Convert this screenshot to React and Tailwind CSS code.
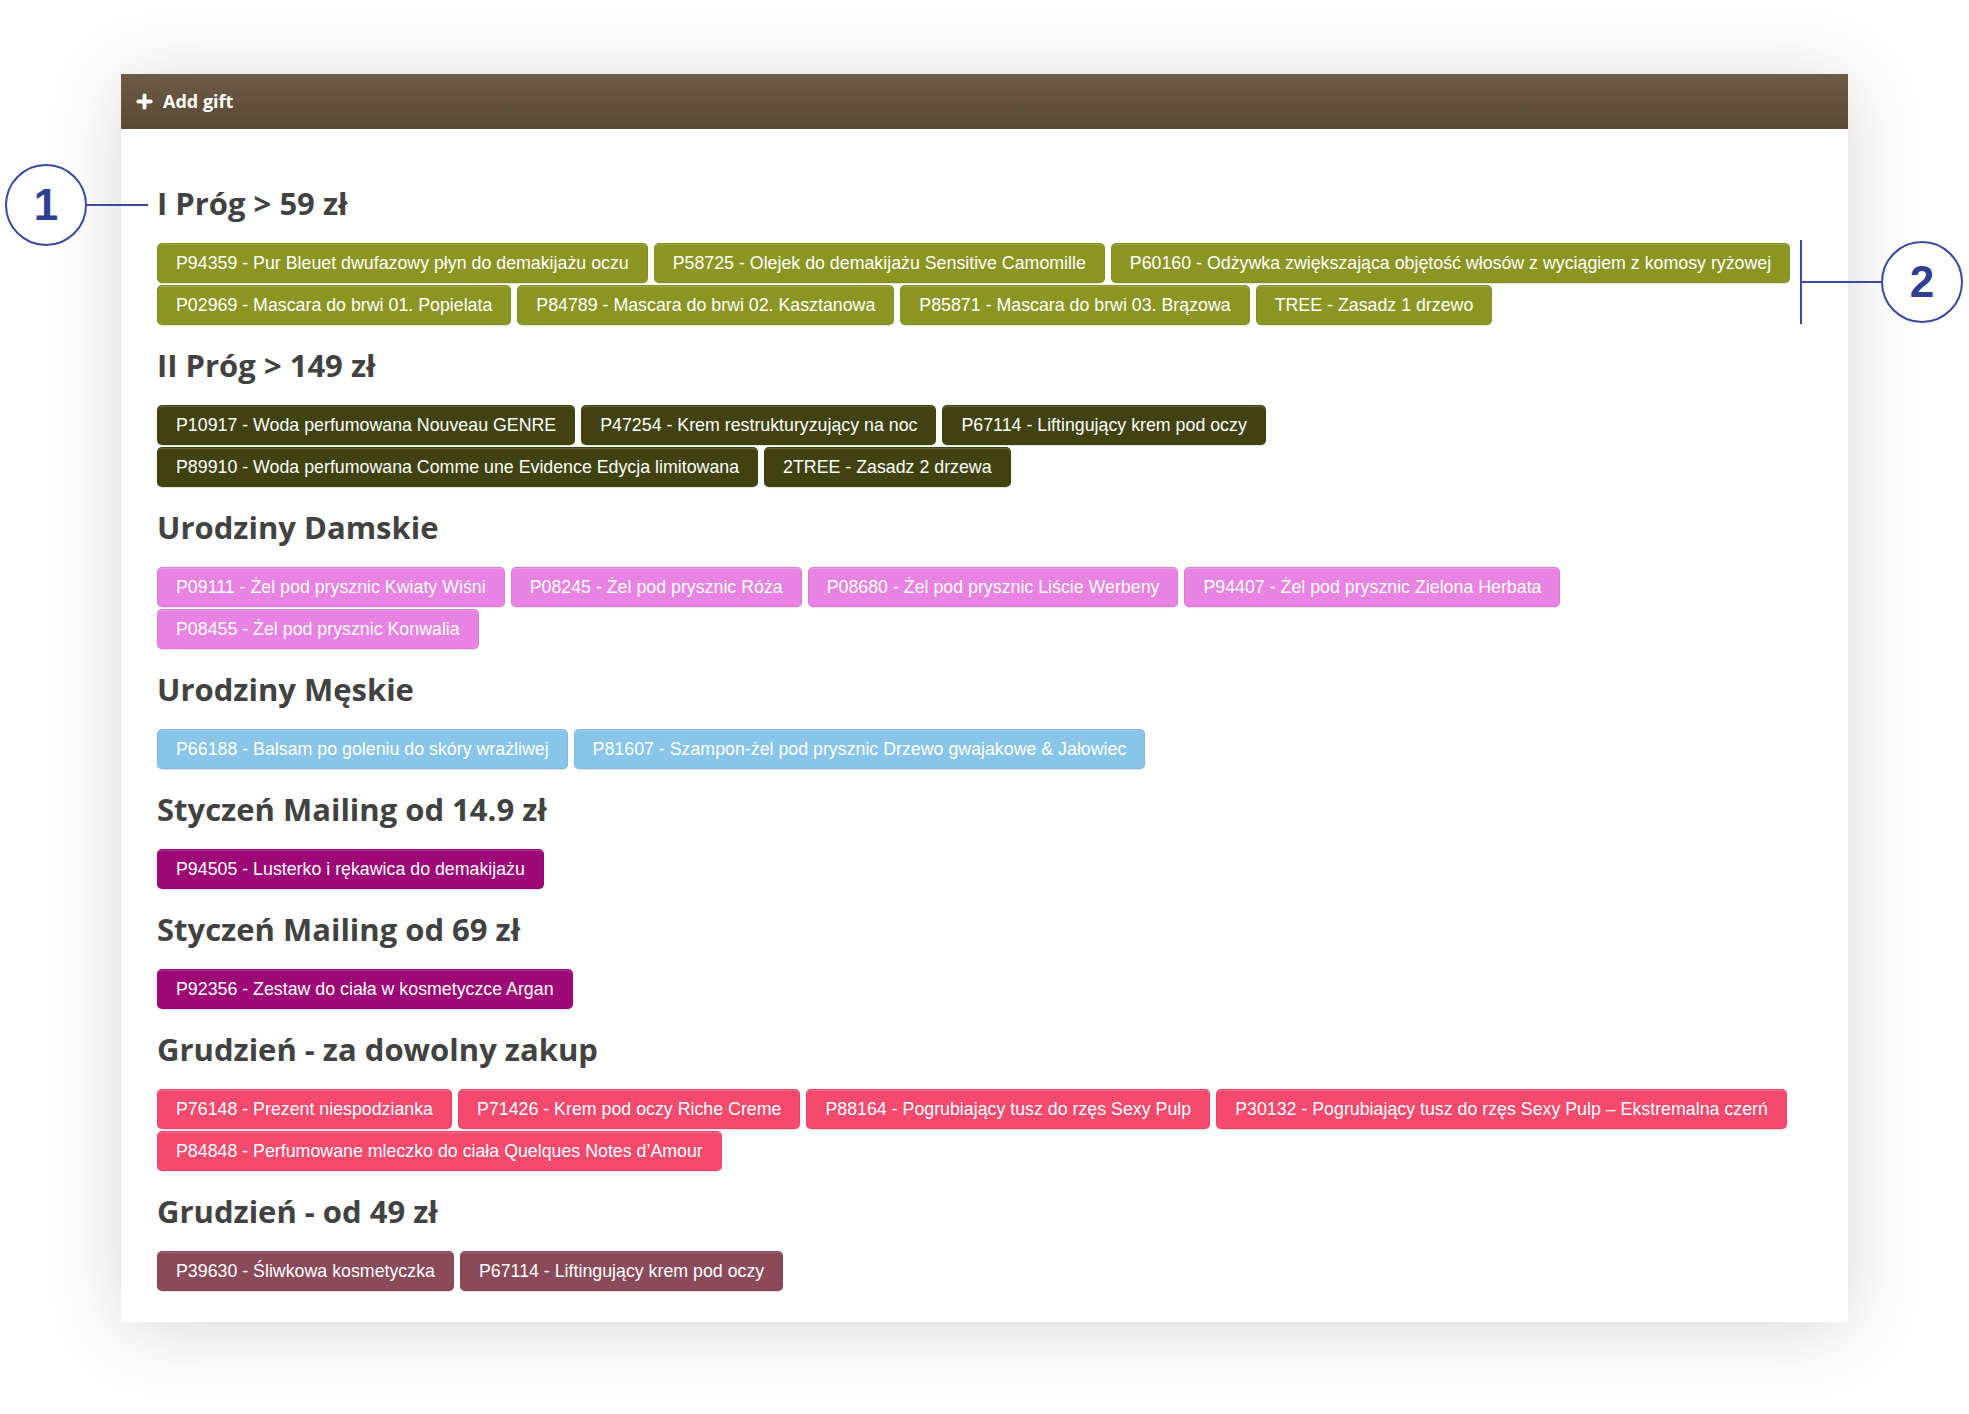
import { Plus } from 'lucide-react'

const SECTIONS = [
  {
    title: 'I Próg > 59 zł',
    color: 'bg-[#8b9522]',
    items: [
      'P94359 - Pur Bleuet dwufazowy płyn do demakijażu oczu',
      'P58725 - Olejek do demakijażu Sensitive Camomille',
      'P60160 - Odżywka zwiększająca objętość włosów z wyciągiem z komosy ryżowej',
      'P02969 - Mascara do brwi 01. Popielata',
      'P84789 - Mascara do brwi 02. Kasztanowa',
      'P85871 - Mascara do brwi 03. Brązowa',
      'TREE - Zasadz 1 drzewo',
    ],
  },
  {
    title: 'II Próg > 149 zł',
    color: 'bg-[#40430f]',
    items: [
      'P10917 - Woda perfumowana Nouveau GENRE',
      'P47254 - Krem restrukturyzujący na noc',
      'P67114 - Liftingujący krem pod oczy',
      'P89910 - Woda perfumowana Comme une Evidence Edycja limitowana',
      '2TREE - Zasadz 2 drzewa',
    ],
  },
  {
    title: 'Urodziny Damskie',
    color: 'bg-[#e883e3]',
    items: [
      'P09111 - Żel pod prysznic Kwiaty Wiśni',
      'P08245 - Żel pod prysznic Róża',
      'P08680 - Żel pod prysznic Liście Werbeny',
      'P94407 - Żel pod prysznic Zielona Herbata',
      'P08455 - Żel pod prysznic Konwalia',
    ],
  },
  {
    title: 'Urodziny Męskie',
    color: 'bg-[#88c5e9]',
    items: [
      'P66188 - Balsam po goleniu do skóry wrażliwej',
      'P81607 - Szampon-żel pod prysznic Drzewo gwajakowe & Jałowiec',
    ],
  },
  {
    title: 'Styczeń Mailing od 14.9 zł',
    color: 'bg-[#9c0876]',
    items: ['P94505 - Lusterko i rękawica do demakijażu'],
  },
  {
    title: 'Styczeń Mailing od 69 zł',
    color: 'bg-[#9c0876]',
    items: ['P92356 - Zestaw do ciała w kosmetyczce Argan'],
  },
  {
    title: 'Grudzień - za dowolny zakup',
    color: 'bg-[#f54a6e]',
    items: [
      'P76148 - Prezent niespodzianka',
      'P71426 - Krem pod oczy Riche Creme',
      'P88164 - Pogrubiający tusz do rzęs Sexy Pulp',
      'P30132 - Pogrubiający tusz do rzęs Sexy Pulp – Ekstremalna czerń',
      'P84848 - Perfumowane mleczko do ciała Quelques Notes d’Amour',
    ],
  },
  {
    title: 'Grudzień - od 49 zł',
    color: 'bg-[#8a4a59]',
    items: ['P39630 - Śliwkowa kosmetyczka', 'P67114 - Liftingujący krem pod oczy'],
  },
]

function Callout({ n }) {
  return (
    <div className="flex h-[82px] w-[82px] items-center justify-center rounded-full border-2 border-[#3a4a9c] bg-white text-[44px] font-bold text-[#2f3f92] [font-family:'Liberation_Sans',Arial,sans-serif]">
      {n}
    </div>
  )
}

export default function App() {
  return (
    <div className="relative min-h-[1414px] w-[1969px] bg-white pt-[74px] [font-family:'Open_Sans',sans-serif]">
      <div className="relative ml-[121px] w-[1727px] bg-white pb-[31px] shadow-[0_6px_70px_rgba(0,0,0,0.16)]">
        {/* header bar */}
        <div className="flex h-[55px] items-center gap-[8px] bg-gradient-to-b from-[#6d5b46] to-[#5a4935] pl-[13px] text-white">
          <Plus size={21} strokeWidth={4.5} />
          <span className="text-[18px] font-bold">Add gift</span>
        </div>

        <div className="px-[36px] pt-[34px]">
          {SECTIONS.map((s) => (
            <section key={s.title}>
              <h2 className="my-[22px] text-[31px] font-bold leading-[36px] text-[#424242]">
                {s.title}
              </h2>
              <div className="flex flex-wrap gap-x-[6px] gap-y-[2px]">
                {s.items.map((it) => (
                  <span
                    key={it}
                    className={`${s.color} flex h-[40px] items-center rounded-[5px] border border-black/5 px-[18px] text-[17.8px] text-white shadow-[inset_0_1px_0_rgba(255,255,255,0.18),0_1px_1px_rgba(0,0,0,0.12)] [font-family:'Liberation_Sans',Arial,sans-serif]`}
                  >
                    {it}
                  </span>
                ))}
              </div>
            </section>
          ))}
        </div>
      </div>

      {/* annotation 1 */}
      <div className="absolute left-[5px] top-[164px] flex items-center">
        <Callout n="1" />
        <div className="h-[2px] w-[61px] bg-[#3a4a9c]" />
      </div>

      {/* annotation 2 */}
      <div className="absolute left-[1800px] top-[240px] flex items-center">
        <div className="h-[84px] w-[2px] bg-[#3a4a9c]" />
        <div className="h-[2px] w-[79px] bg-[#3a4a9c]" />
        <Callout n="2" />
      </div>
    </div>
  )
}
